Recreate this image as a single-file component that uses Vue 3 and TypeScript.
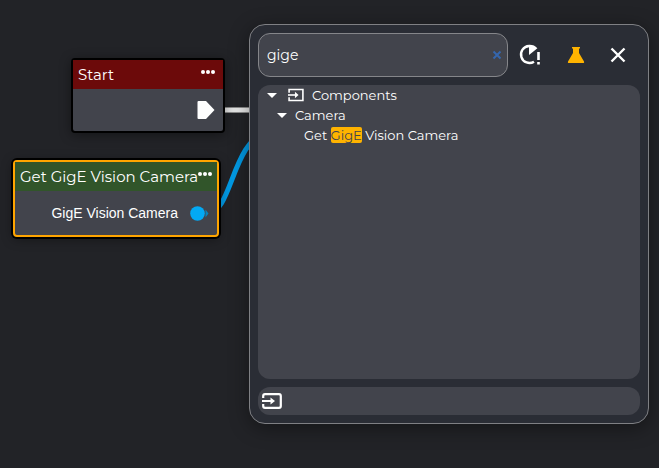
<script setup lang="ts">
import { computed, onMounted, ref } from 'vue'

const query = ref('gige')
const searchBox = ref<HTMLInputElement | null>(null)
const componentsOpen = ref(true)
const cameraOpen = ref(true)
const entry = 'Get GigE Vision Camera'

const parts = computed(() => {
  const q = query.value.toLowerCase()
  const at = q ? entry.toLowerCase().indexOf(q) : -1
  if (at < 0) return { before: entry, hit: '', after: '' }
  return {
    before: entry.slice(0, at),
    hit: entry.slice(at, at + q.length),
    after: entry.slice(at + q.length),
  }
})

onMounted(() => {
  const box = searchBox.value
  if (box) {
    box.focus()
    box.setSelectionRange(box.value.length, box.value.length)
  }
})
</script>

<template>
  <main class="canvas">
    <svg class="wires" aria-hidden="true">
      <path d="M222 110H300" stroke="#8b8b8b" stroke-width="6" />
      <path d="M222 110H300" stroke="#e8e8e8" stroke-width="4" />
      <path d="M208 213C232 213 232 140 268 132" stroke="#0299e3" stroke-width="5" />
    </svg>

    <section class="node start">
      <header class="node-head">
        <h2>Start</h2>
        <button class="dots" aria-label="Start menu">
          <svg width="14" height="4" viewBox="0 0 14 4"><circle cx="2" cy="2" r="2" /><circle cx="7" cy="2" r="2" /><circle cx="12" cy="2" r="2" /></svg>
        </button>
      </header>
      <div class="port">
        <svg width="18" height="18" viewBox="0 0 18 18"><path d="M1.500 0H9L17.500 9L9 18H1.500Q.5 18 .5 17V1Q.5 0 1.500 0Z" fill="#fff" /></svg>
      </div>
    </section>

    <section class="node source">
      <header class="node-head">
        <h2>Get GigE Vision Camera</h2>
        <button class="dots" aria-label="Camera node menu">
          <svg width="14" height="4" viewBox="0 0 14 4"><circle cx="2" cy="2" r="2" /><circle cx="7" cy="2" r="2" /><circle cx="12" cy="2" r="2" /></svg>
        </button>
      </header>
      <div class="port">
        <span>GigE Vision Camera</span>
        <svg width="19" height="15" viewBox="0 0 19 15"><circle cx="7.500" cy="7.500" r="7.300" fill="#03a9f4" /><path d="M15.500 3.500L18.500 7.500L15.500 11.500Z" fill="#0784bd" /></svg>
      </div>
    </section>

    <section class="panel" aria-label="Add node">
      <div class="toolbar">
        <div class="search">
          <input ref="searchBox" v-model="query" type="text" aria-label="Search nodes" spellcheck="false" autocomplete="off" />
          <button class="clear" aria-label="Clear search" @click="query = ''">
            <svg width="10" height="10" viewBox="0 0 10 10"><path d="M1.500 1.500L8.500 8.500M8.500 1.500L1.500 8.500" stroke="#3566ad" stroke-width="2" /></svg>
          </button>
        </div>
        <div class="tools">
          <button aria-label="Deprecated nodes">
            <svg width="24" height="24" viewBox="0 0 24 24"><path d="M11 3A8.500 8.500 0 1 0 16 18.700" fill="none" stroke="#fff" stroke-width="2.400" /><path d="M11 1.800Q16 1.500 19.400 5.200L11 12Z" fill="#fff" /><path d="M20.500 9V17M20.500 19V21.500" stroke="#fff" stroke-width="2.600" /></svg>
          </button>
          <button aria-label="Experimental nodes">
            <svg width="18" height="18" viewBox="0 0 18 18"><path d="M5 1H13V2.500H12V7L17 15.500Q17.500 17 16.500 17H1.500Q.5 17 1 15.500L6 7V2.500H5Z" fill="#ffb300" /></svg>
          </button>
          <button aria-label="Close">
            <svg width="18" height="18" viewBox="0 0 18 18"><path d="M2.500 2.500L15.500 15.500M15.500 2.500L2.500 15.500" stroke="#fff" stroke-width="2.400" /></svg>
          </button>
        </div>
      </div>

      <div class="tree">
        <button class="row" :aria-expanded="componentsOpen" @click="componentsOpen = !componentsOpen">
          <svg class="arrow" width="10" height="5" viewBox="0 0 10 5"><path d="M0 0H10L5 5Z" fill="#fff" /></svg>
          <svg class="group" width="16" height="14" viewBox="0 0 22 18"><path d="M1.500 6V1.500H20.500V16.500H1.500V12" fill="none" stroke="#fff" stroke-width="2.200" /><path d="M0 9H12" stroke="#fff" stroke-width="2.200" /><path d="M9.500 4.500L14.500 9L9.500 13.500Z" fill="#fff" /></svg>
          <span>Components</span>
        </button>
        <button v-if="componentsOpen" class="row child" :aria-expanded="cameraOpen" @click="cameraOpen = !cameraOpen">
          <svg class="arrow" width="10" height="5" viewBox="0 0 10 5"><path d="M0 0H10L5 5Z" fill="#fff" /></svg>
          <span>Camera</span>
        </button>
        <button v-if="componentsOpen && cameraOpen" class="row leaf"><span>{{ parts.before }}<mark v-if="parts.hit">{{ parts.hit }}</mark>{{ parts.after }}</span></button>
      </div>

      <footer class="filters">
        <button aria-label="Components">
          <svg width="20" height="16" viewBox="0 0 20 16"><path d="M1.200 5V3Q1.200 1.200 3 1.200H17Q18.800 1.200 18.800 3V13Q18.800 14.800 17 14.800H3Q1.200 14.800 1.200 13V11" fill="none" stroke="#fff" stroke-width="2.200" /><path d="M0 8H10" stroke="#fff" stroke-width="2" /><path d="M8.500 4.500L13 8L8.500 11.500Z" fill="#fff" /></svg>
        </button>
      </footer>
    </section>
  </main>
</template>

<style>
body {
  margin: 0;
  background: #222327;
}
</style>

<style scoped>
* {
  box-sizing: border-box;
}

.canvas {
  position: relative;
  min-height: 100vh;
  overflow: hidden;
  background: #222327;
  color: #fff;
  font-family: Montserrat, Inter, sans-serif;
}

svg {
  display: block;
  flex: none;
}

button {
  display: flex;
  align-items: center;
  padding: 0;
  border: 0;
  background: none;
  color: inherit;
  font: inherit;
  cursor: pointer;
}

.wires {
  position: absolute;
  inset: 0;
  width: 100%;
  height: 100%;
  fill: none;
}

.node {
  position: absolute;
  border: 2px solid #000;
  border-radius: 4px;
  background: #42444c;
  box-shadow: 0 2px 12px #0006;
}

.start {
  left: 71px;
  top: 58px;
  width: 154px;
}

.source {
  left: 13px;
  top: 160px;
  width: 206px;
  border-color: #ffa500;
  box-shadow: 0 0 0 2px #000, 0 2px 12px #0006;
}

.node-head {
  display: flex;
  align-items: center;
  justify-content: space-between;
  height: 29px;
  padding: 0 8px 0 5px;
  background: #6c0a0a;
}

.source .node-head {
  background: #31552a;
}

.node-head h2 {
  margin: 0;
  font-size: 15px;
  font-weight: 400;
  line-height: 20px;
  white-space: nowrap;
}

.dots {
  align-self: flex-start;
  padding-top: 10px;
  fill: #fff;
}

.port {
  display: flex;
  align-items: center;
  justify-content: flex-end;
  gap: 12px;
  height: 42px;
  padding-right: 8px;
  font-family: "Liberation Sans", sans-serif;
  font-size: 14px;
}

.source .port {
  height: 44px;
}

.panel {
  position: absolute;
  left: 249px;
  top: 24px;
  display: flex;
  flex-direction: column;
  gap: 8px;
  width: 400px;
  padding: 8px;
  border: 1px solid #7f8084;
  border-radius: 16px;
  background: #2a2d35;
  box-shadow: 0 4px 20px #0006;
}

.toolbar {
  display: flex;
  align-items: center;
}

.search {
  display: flex;
  align-items: center;
  width: 250px;
  height: 44px;
  padding: 0 5px 0 8px;
  border: 1px solid #85868a;
  border-radius: 12px;
  background: #42444c;
}

.search input {
  flex: 1;
  min-width: 0;
  padding: 0;
  border: 0;
  outline: 0;
  background: none;
  color: #fff;
  font: inherit;
  font-size: 14px;
}

.tools {
  display: flex;
  flex: 1;
  align-items: center;
  justify-content: space-between;
  padding: 0 13px 0 10px;
}

.tree {
  height: 294px;
  border-radius: 12px;
  background: #42444c;
  font-size: 13px;
}

.row {
  gap: 8px;
  width: 100%;
  height: 20px;
  padding-left: 9px;
  line-height: 16px;
  white-space: pre;
}

.group {
  margin-left: 3px;
}

.child {
  padding-left: 19px;
}

.leaf {
  padding-left: 46px;
}

mark {
  border-radius: 2px;
  background: #ffb300;
  color: #42444c;
}

.filters {
  display: flex;
  align-items: center;
  height: 28px;
  padding-left: 4px;
  border-radius: 12px;
  background: #42444c;
}
</style>
